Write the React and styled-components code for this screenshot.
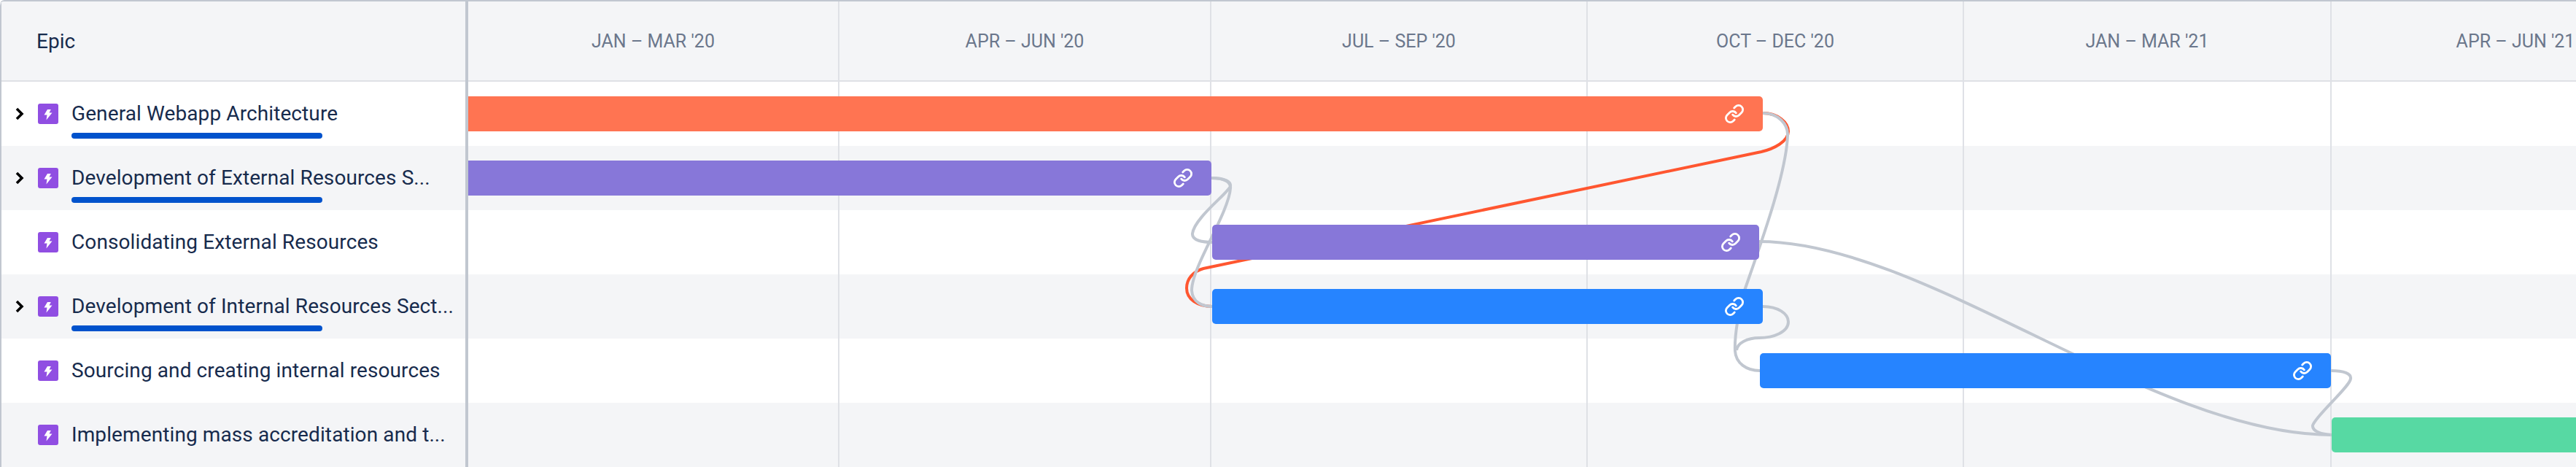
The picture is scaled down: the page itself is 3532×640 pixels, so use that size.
import React from 'react';
import styled, {createGlobalStyle} from 'styled-components';
import {Link} from 'lucide-react';

const GlobalStyle = createGlobalStyle`
    html, body {
        margin: 0;
        padding: 0;
        background: #fff;
    }
    * {
        box-sizing: border-box;
    }
`;

const Roadmap = styled.div`
    display: flex;
    width: 3532px;
    height: 640px;
    overflow: hidden;
    border-top: 2px solid #c1c7d0;
    border-top-left-radius: 6px;
    font-family: Roboto, "Liberation Sans", sans-serif;
    color: #172b4d;
`;

const EpicPanel = styled.div`
    flex: 0 0 642px;
    min-width: 0;
    border-left: 2px solid #c1c7d0;
    border-right: 4px solid #c1c7d0;
    border-top-left-radius: 6px;
`;

const PanelHeader = styled.div`
    display: flex;
    align-items: center;
    height: 110px;
    padding-left: 48px;
    background: #f4f5f7;
    border-bottom: 2px solid #dfe1e6;
    font-size: 28px;
`;

const EpicRow = styled.div`
    display: flex;
    align-items: center;
    height: 88px;
    background: ${props => (props.$shaded ? '#f4f5f7' : '#fff')};
`;

const Chevron = styled.svg`
    flex: 0 0 16px;
    width: 16px;
    height: 20px;
    margin-left: 17px;
    margin-right: 17px;
`;

const EpicIcon = styled.svg`
    flex: 0 0 28px;
    width: 28px;
    height: 28px;
    margin-right: 18px;
`;

const TitleWrap = styled.div`
    position: relative;
    white-space: nowrap;
    font-size: 28px;
    line-height: 36px;
    letter-spacing: 0.1px;
`;

const Progress = styled.div`
    position: absolute;
    left: 0;
    top: 44px;
    width: 344px;
    height: 8px;
    border-radius: 4px;
    background: #0052cc;
`;

const Timeline = styled.div`
    flex: 1;
    min-width: 0;
`;

const TimeHeader = styled.div`
    display: flex;
    height: 110px;
    background: #f4f5f7;
    border-bottom: 2px solid #dfe1e6;
`;

const Quarter = styled.div`
    display: flex;
    align-items: center;
    justify-content: center;
    flex: 0 0 ${props => props.$width}px;
    border-right: 2px solid #dfe1e6;
    font-size: 25px;
    color: #6b778c;
    white-space: nowrap;
`;

const TimeBody = styled.div`
    position: relative;
    height: 528px;
    overflow: hidden;
`;

const Stripe = styled.div`
    height: 88px;
    background: ${props => (props.$shaded ? '#f4f5f7' : '#fff')};
`;

const GridLines = styled.div`
    position: absolute;
    inset: 0;
    display: flex;
`;

const GridColumn = styled.div`
    flex: 0 0 ${props => props.$width}px;
    border-right: 2px solid #dfe1e6;
`;

const Links = styled.svg`
    position: absolute;
    inset: 0;
    width: 100%;
    height: 100%;
`;

const BarLayer = styled.div`
    position: absolute;
    inset: 0;
    display: flex;
    flex-direction: column;
`;

const BarRow = styled.div`
    display: flex;
    align-items: center;
    flex: 0 0 88px;
`;

const Bar = styled.div`
    display: flex;
    align-items: center;
    justify-content: flex-end;
    flex: 0 0 ${props => props.$width}px;
    height: 48px;
    margin-left: ${props => props.$start}px;
    padding-right: 25px;
    border-radius: ${props => (props.$start === 0 ? '0 5px 5px 0' : '5px')};
    background: ${props => props.$color};
    color: #fff;
`;

const quarters = [
    {label: 'JAN – MAR \'20', width: 509},
    {label: 'APR – JUN \'20', width: 510},
    {label: 'JUL – SEP \'20', width: 516},
    {label: 'OCT – DEC \'20', width: 516},
    {label: 'JAN – MAR \'21', width: 504},
    {label: 'APR – JUN \'21', width: 506},
];

const epics = [
    {title: 'General Webapp Architecture', expandable: true, start: 0, width: 1775, color: '#ff7452'},
    {title: 'Development of External Resources S...', expandable: true, start: 0, width: 1019, color: '#8777d9'},
    {title: 'Consolidating External Resources', start: 1020, width: 750, color: '#8777d9'},
    {title: 'Development of Internal Resources Sect...', expandable: true, start: 1020, width: 755, color: '#2684ff'},
    {title: 'Sourcing and creating internal resources', start: 1771, width: 783, color: '#2684ff'},
    {title: 'Implementing mass accreditation and t...', start: 2555, width: 400, color: '#57d9a3', noLink: true},
];

const greyLinks = [
    'M2417 155 C2438 155 2452 170 2451 186 C2449 240 2412 340 2392 398 C2384 425 2378 460 2379 481 C2380 498 2395 508 2413 508',
    'M1661 244 C1680 244 1688 249 1687 255 C1685 264 1638 298 1635 320 C1634 330 1650 332 1662 332',
    'M1661 244 C1678 244 1688 249 1687 258 C1686 280 1660 326 1645 360 C1638 376 1634 388 1634 398 C1635 414 1648 420 1662 420',
    'M2412 331 C2640 331 2950 596 3197 596',
    'M2417 420 C2438 420 2452 430 2452 441 C2452 455 2432 463 2412 463 C2396 463 2382 470 2381 480',
    'M3196 508 C3214 508 3224 512 3223 519 C3222 530 3175 570 3171 583 C3170 592 3185 595 3197 596',
];

const redLink = 'M2417 155 C2438 155 2452 168 2452 180 C2452 194 2432 204 2415 208 L1650 368 C1636 372 1627 382 1627 395 C1627 410 1642 420 1662 420';

export default function App() {
    return (
        <>
            <GlobalStyle/>
            <Roadmap>
                <EpicPanel>
                    <PanelHeader>Epic</PanelHeader>
                    {epics.map((epic, i) => (
                        <EpicRow key={epic.title} $shaded={i % 2 === 1}>
                            <Chevron viewBox="0 0 16 20">
                                {epic.expandable && (
                                    <path d="M4 3 L11 10 L4 17" fill="none" stroke="#000" strokeWidth="3.6"/>
                                )}
                            </Chevron>
                            <EpicIcon viewBox="0 0 28 28">
                                <rect width="28" height="28" rx="3" fill="#904ee2"/>
                                <path d="M13 8 L8.5 15.5 H12.5 L11.5 22.5 L19.5 12.5 H15.5 L17.8 8 Z" fill="#fff"/>
                            </EpicIcon>
                            <TitleWrap>
                                {epic.title}
                                {epic.expandable && <Progress/>}
                            </TitleWrap>
                        </EpicRow>
                    ))}
                </EpicPanel>
                <Timeline>
                    <TimeHeader>
                        {quarters.map(q => (
                            <Quarter key={q.label} $width={q.width}>{q.label}</Quarter>
                        ))}
                    </TimeHeader>
                    <TimeBody>
                        {epics.map((epic, i) => (
                            <Stripe key={epic.title} $shaded={i % 2 === 1}/>
                        ))}
                        <GridLines>
                            {quarters.map(q => (
                                <GridColumn key={q.label} $width={q.width}/>
                            ))}
                        </GridLines>
                        <Links viewBox="642 112 2890 528" fill="none" strokeWidth="4">
                            <path d={redLink} stroke="#ff5630"/>
                            {greyLinks.map(d => (
                                <path key={d} d={d} stroke="#c1c7d0"/>
                            ))}
                        </Links>
                        <BarLayer>
                            {epics.map(epic => (
                                <BarRow key={epic.title}>
                                    <Bar $start={epic.start} $width={epic.width} $color={epic.color}>
                                        {!epic.noLink && <Link size={28} strokeWidth={2.4}/>}
                                    </Bar>
                                </BarRow>
                            ))}
                        </BarLayer>
                    </TimeBody>
                </Timeline>
            </Roadmap>
        </>
    );
}
